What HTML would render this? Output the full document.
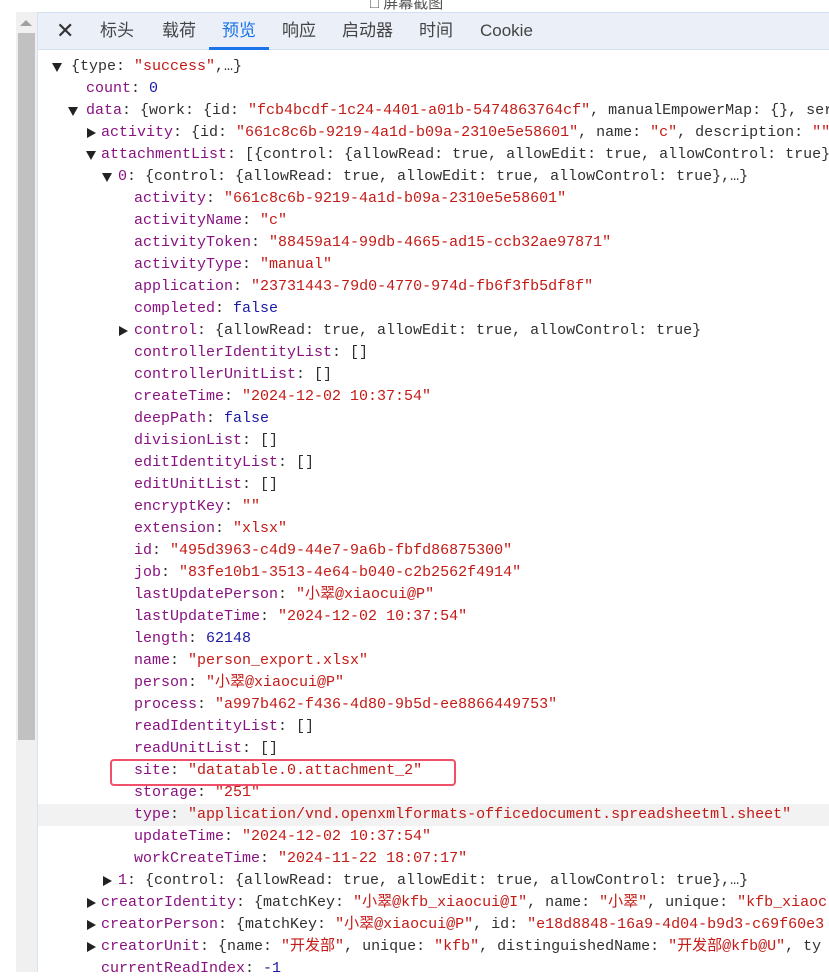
<!DOCTYPE html>
<html><head><meta charset="utf-8"><style>
*{margin:0;padding:0;box-sizing:border-box}
body{width:829px;height:972px;overflow:hidden;background:#fff;position:relative;font-family:"Liberation Sans","Noto Sans CJK SC",sans-serif}
.left{position:absolute;left:0;top:50px;width:16px;height:922px;background:#fff}
.sb{position:absolute;left:16px;top:12px;width:21px;height:960px;background:#f0f0f0}
.thumb{position:absolute;left:18px;top:33px;width:17px;height:707px;background:#c1c1c1}
.div{position:absolute;left:37px;top:12px;width:1px;height:960px;background:#d6e2f3}
.tabs{position:absolute;left:38px;top:12px;width:791px;height:38px;background:#eaeff8;border-top:1px solid #d3e0f3;border-bottom:1px solid #d3e0f3}
.tab{position:absolute;top:0;line-height:36px;font-size:17px;color:#444}
.ul{position:absolute;left:209px;top:47px;width:60px;height:3px;background:#1a73e8}
.ln{position:absolute;white-space:pre;font-family:"Liberation Mono","Noto Sans CJK SC",monospace;font-size:15px;line-height:22px;color:#303030;height:22px}
.k{color:#881280}.s{color:#c41a16}.n{color:#1a1aa6}
.ar{position:absolute;width:0;height:0}
.d{border-left:5px solid transparent;border-right:5px solid transparent;border-top:9px solid #222;margin-top:7px}
.r{border-top:5px solid transparent;border-bottom:5px solid transparent;border-left:9px solid #222;margin-top:6px}
.hl{position:absolute;left:110px;top:759px;width:346px;height:27px;border:2px solid #f0506a;border-radius:4px}
.hov{position:absolute;left:38px;top:804px;width:791px;height:22px;background:#f2f2f2}
</style></head><body>
<div style="position:absolute;left:370px;top:-8px;font-size:15px;color:#555">□ 屏幕截图</div>
<div class="left"></div>
<div class="sb"></div><div class="thumb"></div><div class="div"></div>
<div style="position:absolute;left:20px;top:20px;width:0;height:0;border-left:6px solid transparent;border-right:6px solid transparent;border-bottom:6px solid #a0a0a0"></div>
<div class="tabs">
<div class="tab" style="left:18px;font-size:22px;color:#333">✕</div>
<div class="tab" style="left:62px">标头</div>
<div class="tab" style="left:124px">载荷</div>
<div class="tab" style="left:184px;color:#1a73e8">预览</div>
<div class="tab" style="left:244px">响应</div>
<div class="tab" style="left:304px">启动器</div>
<div class="tab" style="left:381px">时间</div>
<div class="tab" style="left:442px">Cookie</div>
</div>
<div class="ul"></div>
<div class="hov"></div>

<div class="ar d" style="left:52px;top:56px"></div><div class="ln" style="left:71px;top:56px">{type: <span class="s">"success"</span>,…}</div>
<div class="ln" style="left:86px;top:78px"><span class="k">count</span>: <span class="n">0</span></div>
<div class="ar d" style="left:68px;top:100px"></div><div class="ln" style="left:86px;top:100px"><span class="k">data</span>: {work: {id: <span class="s">"fcb4bcdf-1c24-4401-a01b-5474863764cf"</span>, manualEmpowerMap: {}, ser</div>
<div class="ar r" style="left:87px;top:122px"></div><div class="ln" style="left:101px;top:122px"><span class="k">activity</span>: {id: <span class="s">"661c8c6b-9219-4a1d-b09a-2310e5e58601"</span>, name: <span class="s">"c"</span>, description: <span class="s">""</span></div>
<div class="ar d" style="left:86px;top:144px"></div><div class="ln" style="left:101px;top:144px"><span class="k">attachmentList</span>: [{control: {allowRead: true, allowEdit: true, allowControl: true}</div>
<div class="ar d" style="left:102px;top:166px"></div><div class="ln" style="left:118px;top:166px"><span class="k">0</span>: {control: {allowRead: true, allowEdit: true, allowControl: true},…}</div>
<div class="ln" style="left:134px;top:188px"><span class="k">activity</span>: <span class="s">"661c8c6b-9219-4a1d-b09a-2310e5e58601"</span></div>
<div class="ln" style="left:134px;top:210px"><span class="k">activityName</span>: <span class="s">"c"</span></div>
<div class="ln" style="left:134px;top:232px"><span class="k">activityToken</span>: <span class="s">"88459a14-99db-4665-ad15-ccb32ae97871"</span></div>
<div class="ln" style="left:134px;top:254px"><span class="k">activityType</span>: <span class="s">"manual"</span></div>
<div class="ln" style="left:134px;top:276px"><span class="k">application</span>: <span class="s">"23731443-79d0-4770-974d-fb6f3fb5df8f"</span></div>
<div class="ln" style="left:134px;top:298px"><span class="k">completed</span>: <span class="n">false</span></div>
<div class="ar r" style="left:119px;top:320px"></div><div class="ln" style="left:134px;top:320px"><span class="k">control</span>: {allowRead: true, allowEdit: true, allowControl: true}</div>
<div class="ln" style="left:134px;top:342px"><span class="k">controllerIdentityList</span>: []</div>
<div class="ln" style="left:134px;top:364px"><span class="k">controllerUnitList</span>: []</div>
<div class="ln" style="left:134px;top:386px"><span class="k">createTime</span>: <span class="s">"2024-12-02 10:37:54"</span></div>
<div class="ln" style="left:134px;top:408px"><span class="k">deepPath</span>: <span class="n">false</span></div>
<div class="ln" style="left:134px;top:430px"><span class="k">divisionList</span>: []</div>
<div class="ln" style="left:134px;top:452px"><span class="k">editIdentityList</span>: []</div>
<div class="ln" style="left:134px;top:474px"><span class="k">editUnitList</span>: []</div>
<div class="ln" style="left:134px;top:496px"><span class="k">encryptKey</span>: <span class="s">""</span></div>
<div class="ln" style="left:134px;top:518px"><span class="k">extension</span>: <span class="s">"xlsx"</span></div>
<div class="ln" style="left:134px;top:540px"><span class="k">id</span>: <span class="s">"495d3963-c4d9-44e7-9a6b-fbfd86875300"</span></div>
<div class="ln" style="left:134px;top:562px"><span class="k">job</span>: <span class="s">"83fe10b1-3513-4e64-b040-c2b2562f4914"</span></div>
<div class="ln" style="left:134px;top:584px"><span class="k">lastUpdatePerson</span>: <span class="s">"小翠@xiaocui@P"</span></div>
<div class="ln" style="left:134px;top:606px"><span class="k">lastUpdateTime</span>: <span class="s">"2024-12-02 10:37:54"</span></div>
<div class="ln" style="left:134px;top:628px"><span class="k">length</span>: <span class="n">62148</span></div>
<div class="ln" style="left:134px;top:650px"><span class="k">name</span>: <span class="s">"person_export.xlsx"</span></div>
<div class="ln" style="left:134px;top:672px"><span class="k">person</span>: <span class="s">"小翠@xiaocui@P"</span></div>
<div class="ln" style="left:134px;top:694px"><span class="k">process</span>: <span class="s">"a997b462-f436-4d80-9b5d-ee8866449753"</span></div>
<div class="ln" style="left:134px;top:716px"><span class="k">readIdentityList</span>: []</div>
<div class="ln" style="left:134px;top:738px"><span class="k">readUnitList</span>: []</div>
<div class="ln" style="left:134px;top:760px"><span class="k">site</span>: <span class="s">"datatable.0.attachment_2"</span></div>
<div class="ln" style="left:134px;top:782px"><span class="k">storage</span>: <span class="s">"251"</span></div>
<div class="ln" style="left:134px;top:804px"><span class="k">type</span>: <span class="s">"application/vnd.openxmlformats-officedocument.spreadsheetml.sheet"</span></div>
<div class="ln" style="left:134px;top:826px"><span class="k">updateTime</span>: <span class="s">"2024-12-02 10:37:54"</span></div>
<div class="ln" style="left:134px;top:848px"><span class="k">workCreateTime</span>: <span class="s">"2024-11-22 18:07:17"</span></div>
<div class="ar r" style="left:103px;top:870px"></div><div class="ln" style="left:118px;top:870px"><span class="k">1</span>: {control: {allowRead: true, allowEdit: true, allowControl: true},…}</div>
<div class="ar r" style="left:87px;top:892px"></div><div class="ln" style="left:101px;top:892px"><span class="k">creatorIdentity</span>: {matchKey: <span class="s">"小翠@kfb_xiaocui@I"</span>, name: <span class="s">"小翠"</span>, unique: <span class="s">"kfb_xiaoc</span></div>
<div class="ar r" style="left:87px;top:914px"></div><div class="ln" style="left:101px;top:914px"><span class="k">creatorPerson</span>: {matchKey: <span class="s">"小翠@xiaocui@P"</span>, id: <span class="s">"e18d8848-16a9-4d04-b9d3-c69f60e3</span></div>
<div class="ar r" style="left:87px;top:936px"></div><div class="ln" style="left:101px;top:936px"><span class="k">creatorUnit</span>: {name: <span class="s">"开发部"</span>, unique: <span class="s">"kfb"</span>, distinguishedName: <span class="s">"开发部@kfb@U"</span>, ty</div>
<div class="ln" style="left:101px;top:958px"><span class="k">currentReadIndex</span>: <span class="n">-1</span></div>
<div class="hl"></div>
</body></html>
